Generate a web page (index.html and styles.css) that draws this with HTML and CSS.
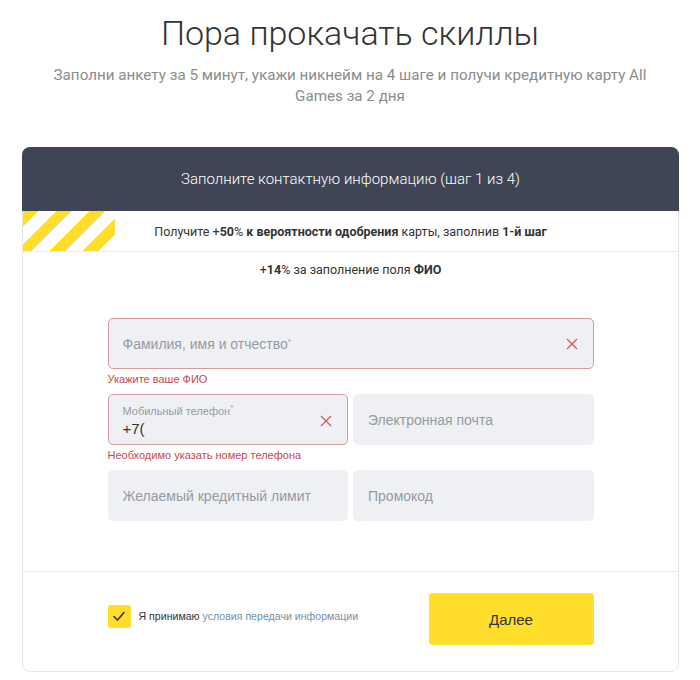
FILE: index.html
```html
<!DOCTYPE html>
<html lang="ru">
<head>
<meta charset="utf-8">
<title>Пора прокачать скиллы</title>
<link rel="stylesheet" href="styles.css">
</head>
<body>
<div class="page">
  <h1 class="title">Пора прокачать скиллы</h1>
  <p class="subtitle">Заполни анкету за 5 минут, укажи никнейм на 4 шаге и получи кредитную карту All Games за 2 дня</p>

  <div class="card">
    <div class="card-header">Заполните контактную информацию (шаг 1 из 4)</div>
    <div class="promo">
      <span class="promo-stripes"></span>
      <span class="promo-text">Получите +<b>50</b>% <b>к вероятности одобрения</b> карты, заполнив <b>1-й шаг</b></span>
    </div>
    <div class="card-body">
      <div class="bonus">+<b>14</b>% за заполнение поля <b>ФИО</b></div>
      <div class="form">
        <div class="field">
          <div class="input error">
            <span class="placeholder">Фамилия, имя и отчество<sup>*</sup></span>
            <svg class="clear" viewBox="0 0 12 12" width="12" height="12"><path d="M1 1L11 11M11 1L1 11" stroke="currentColor" stroke-width="1.3" fill="none"/></svg>
          </div>
          <div class="error-text">Укажите ваше ФИО</div>
        </div>
        <div class="row">
          <div class="field">
            <div class="input error filled">
              <span class="value-wrap">
                <span class="label">Мобильный телефон<sup>*</sup></span>
                <span class="value">+7(</span>
              </span>
              <svg class="clear" viewBox="0 0 12 12" width="12" height="12"><path d="M1 1L11 11M11 1L1 11" stroke="currentColor" stroke-width="1.3" fill="none"/></svg>
            </div>
            <div class="error-text">Необходимо указать номер телефона</div>
          </div>
          <div class="field">
            <div class="input"><span class="placeholder">Электронная почта</span></div>
          </div>
        </div>
        <div class="row">
          <div class="input"><span class="placeholder">Желаемый кредитный лимит</span></div>
          <div class="input"><span class="placeholder">Промокод</span></div>
        </div>
      </div>
    </div>
    <div class="card-footer">
      <div class="footer-inner">
        <label class="agree">
          <span class="checkbox">
            <svg viewBox="0 0 14 14" width="14" height="14"><path d="M2 7.5L5.5 11L12 3.5" stroke="#333" stroke-width="1.6" fill="none" stroke-linecap="round" stroke-linejoin="round"/></svg>
          </span>
          <span class="agree-text">Я принимаю <span class="link">условия передачи информации</span></span>
        </label>
        <button class="btn" type="button">Далее</button>
      </div>
    </div>
  </div>
</div>
</body>
</html>
```

FILE: styles.css
```css
html, body {
  margin: 0;
  padding: 0;
  background: #fff;
}
body {
  font-family: Roboto, "Liberation Sans", Arial, sans-serif;
  color: #333;
}
.page {
  padding-top: 10px;
}
.title {
  margin: 0;
  text-align: center;
  font-weight: 300;
  font-size: 34px;
  line-height: 46px;
  color: #333;
}
.subtitle {
  margin: 9px auto 0;
  max-width: 620px;
  text-align: center;
  font-size: 15.2px;
  line-height: 21px;
  color: #8c8c8c;
  font-weight: 400;
}
.card {
  margin: 40px 21px 0 22px;
  border: 1px solid #e6e6e8;
  border-radius: 8px;
  background: #fff;
}
.card-header {
  height: 64px;
  margin: -1px -1px 0 -1px;
  background: #3f4555;
  border-radius: 8px 8px 0 0;
  color: #fff;
  font-weight: 300;
  font-size: 15px;
  display: flex;
  align-items: center;
  justify-content: center;
}
.promo {
  position: relative;
  height: 40px;
  border-bottom: 1px solid #ececec;
  display: flex;
  align-items: center;
  justify-content: center;
  font-size: 12.5px;
  color: #333;
}
.promo-stripes {
  position: absolute;
  left: 0;
  top: 0;
  width: 92px;
  height: 40px;
  background: repeating-linear-gradient(135deg, #ffdd2d 0 11px, #fff 11px 23.5px);
  clip-path: polygon(0 0, 100% 0, 100% 60%, 85% 100%, 0 100%);
}
.promo-text b {
  font-weight: 700;
}
.card-body {
  padding: 10px 0 50px;
}
.bonus {
  text-align: center;
  font-size: 12.5px;
  line-height: 16px;
  color: #333;
}
.form {
  width: 486px;
  margin: 40px auto 0;
  display: flex;
  flex-direction: column;
  gap: 8px;
}
.row {
  display: grid;
  grid-template-columns: 1fr 1fr;
  gap: 5px;
}
.input {
  box-sizing: border-box;
  height: 51px;
  border-radius: 5px;
  border: 1px solid transparent;
  background: #eef0f4;
  display: flex;
  align-items: center;
  justify-content: space-between;
  padding: 0 15px 0 14px;
  font-family: "Liberation Sans", Arial, sans-serif;
  font-size: 14px;
}
.input.error {
  border-color: #d99a9c;
}
.placeholder {
  color: #959ba5;
}
.placeholder sup, .label sup {
  font-size: 8px;
  vertical-align: 5px;
  line-height: 0;
}
.clear {
  color: #d4575b;
  flex: none;
}
.input.filled {
  align-items: flex-start;
  padding-top: 10px;
}
.input.filled .clear {
  margin-top: 10px;
}
.value-wrap {
  display: flex;
  flex-direction: column;
}
.label {
  font-size: 11px;
  line-height: 13px;
  color: #959ba5;
}
.value {
  font-size: 15px;
  line-height: 16px;
  color: #333;
  margin-top: 3px;
}
.error-text {
  margin-top: 4px;
  font-family: "Liberation Sans", Arial, sans-serif;
  font-size: 11px;
  line-height: 13px;
  color: #c9474b;
}
.card-footer {
  border-top: 1px solid #ececec;
  padding: 21px 0 26px;
}
.footer-inner {
  width: 486px;
  margin: 0 auto;
  display: flex;
  justify-content: space-between;
  align-items: center;
}
.agree {
  display: flex;
  align-items: center;
  gap: 8px;
  margin-bottom: 6px;
  font-family: "Liberation Sans", Arial, sans-serif;
  font-size: 10.6px;
  color: #333;
}
.checkbox {
  width: 23px;
  height: 23px;
  border-radius: 3px;
  background: #ffdd2d;
  display: flex;
  align-items: center;
  justify-content: center;
}
.link {
  color: #7a8ea8;
}
.btn {
  width: 165px;
  height: 52px;
  border: none;
  border-radius: 4px;
  background: #ffdd2d;
  color: #333;
  font-family: "Liberation Sans", Arial, sans-serif;
  font-size: 15px;
  cursor: pointer;
}
```
